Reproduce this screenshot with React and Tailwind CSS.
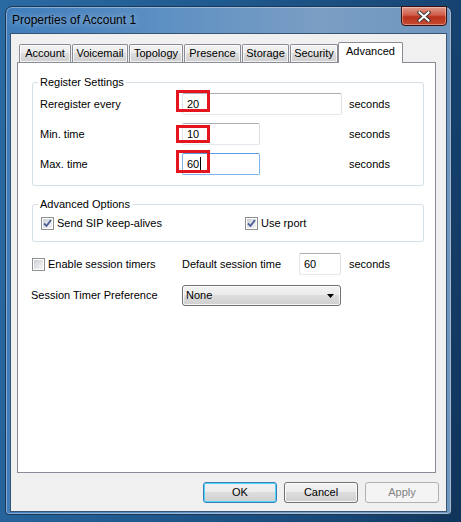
import React from "react";

function TextBox({ w, value, focused, cursor }) {
  return (
    <div
      className={`h-[22px] ${w} flex items-center pl-[4px] text-[11px] text-black bg-white border rounded-[2px] ${
        focused
          ? "border-[#7eb4ea] border-t-[#569de5]"
          : "border-[#e3e9ef] border-t-[#abadb3] border-l-[#e2e3ea] border-r-[#dbdfe6]"
      }`}
    >
      <span className="leading-[13px]">{value}</span>
      {cursor && <span className="w-px h-[14px] bg-black ml-[1px]" />}
    </div>
  );
}

function RedBox({ cls }) {
  return <div className={`absolute border-[3px] border-[#e4151f] pointer-events-none ${cls}`} />;
}

function CheckBox({ checked }) {
  return (
    <div className="w-[13px] h-[13px] border border-[#8e8f8f] bg-white p-px shrink-0">
      <div className="w-full h-full bg-[linear-gradient(135deg,#cbcfd5,#f6f6f6)] flex items-center justify-center">
        {checked && (
          <svg width="9" height="9" viewBox="0 0 9 9">
            <path d="M1 4.5 L3.5 7 L8 1" fill="none" stroke="#4a5f97" strokeWidth="1.8" />
          </svg>
        )}
      </div>
    </div>
  );
}

function Tab({ label, w, selected }) {
  if (selected) {
    return (
      <div
        className={`${w} h-[21px] -mb-px -ml-px relative z-10 bg-white border-x border-t border-[#898c95] rounded-t-[2px] flex justify-center items-start pt-[2px]`}
      >
        <span className="leading-[13px]">{label}</span>
      </div>
    );
  }
  return (
    <div
      className={`${w} h-[18px] border-x border-t border-[#898c95] rounded-t-[2px] bg-[linear-gradient(#f2f2f2,#ebebeb_50%,#dddddd_50%,#cfcfcf)] flex justify-center items-center shadow-[inset_0_0_0_1px_rgba(255,255,255,0.7)]`}
    >
      <span className="leading-[13px]">{label}</span>
    </div>
  );
}

function Button({ children, def, disabled }) {
  return (
    <div
      className={`w-[74px] h-[21px] rounded-[3px] border flex items-center justify-center leading-[13px] ${
        disabled
          ? "border-[#adb2b5] bg-[#f4f4f4] text-[#838383]"
          : def
          ? "border-[#3c7fb1] bg-[linear-gradient(#f2f2f2,#ebebeb_50%,#dddddd_50%,#cfcfcf)] shadow-[inset_0_0_0_1px_#48d7ff]"
          : "border-[#707070] bg-[linear-gradient(#f2f2f2,#ebebeb_50%,#dddddd_50%,#cfcfcf)] shadow-[inset_0_0_0_1px_rgba(255,255,255,0.8)]"
      }`}
    >
      {children}
    </div>
  );
}

export default function App() {
  return (
    <div className="w-[461px] h-[522px] overflow-hidden bg-[linear-gradient(100deg,#2a6aa3,#1f5a8f_40%,#174574_80%,#10345a)] pl-[5px] pt-[6px] font-['Liberation_Sans',Arial,sans-serif] text-[11px] text-black">
      <div className="w-[447px] h-[509px] rounded-t-[7px] rounded-b-[4px] border border-[#1c3653] bg-[linear-gradient(90deg,#3f7dbb,#5d90c3_35%,#7a9ec4_70%,#6f96bf)] shadow-[1px_2px_4px_rgba(0,0,0,0.5)] flex flex-col shadow-[inset_0_0_0_1px_rgba(255,255,255,0.35)]">
        <div className="h-[26px] flex justify-between items-start shrink-0">
          <div className="h-[26px] flex items-center pl-[6px] text-[12px] [text-shadow:0_0_6px_rgba(255,255,255,0.6)]">
            Properties of Account 1
          </div>
          <div className="-mt-px mr-[4px] w-[46px] h-[20px] rounded-b-[4px] border border-[#3c0f0c] bg-[linear-gradient(#e09a8c,#cf5c48_45%,#b8311c_55%,#c84b32)] flex items-center justify-center shadow-[inset_0_0_0_1px_rgba(255,255,255,0.35)]">
            <svg width="14" height="11" viewBox="0 0 14 11">
              <path d="M2.5 1.5 L11.5 9.5 M11.5 1.5 L2.5 9.5" stroke="#3b3b3b" strokeWidth="4" strokeLinecap="square" />
              <path d="M2.5 1.5 L11.5 9.5 M11.5 1.5 L2.5 9.5" stroke="#ffffff" strokeWidth="2" strokeLinecap="square" />
            </svg>
          </div>
        </div>
        <div className="ml-[4px] mr-[4px] mb-[2px] flex-1 border border-[#3a5572] bg-[#f0f0f0] flex flex-col pt-[8px] pr-[7px]">
          <div className="ml-[8px] h-[20px] flex items-end gap-px">
            <Tab label="Account" w="w-[52px]" />
            <Tab label="Voicemail" w="w-[56px]" />
            <Tab label="Topology" w="w-[54px]" />
            <Tab label="Presence" w="w-[57px]" />
            <Tab label="Storage" w="w-[47px]" />
            <Tab label="Security" w="w-[48px]" />
            <Tab label="Advanced" w="w-[65px]" selected />
          </div>
          <div className="ml-[6px] w-[419px] h-[411px] bg-white border border-[#898c95] pl-[14px] pr-[11px] flex flex-col">
            {/* Register Settings */}
            <div className="relative mt-[19px] border border-[#d5dfe5] rounded-[3px] pt-[10px] pb-[10px] flex flex-col gap-[8px]">
              <span className="absolute -top-[7px] left-[5px] px-[2px] bg-white leading-[13px]">Register Settings</span>
              <div className="h-[22px] flex items-center">
                <div className="w-[149px] pl-[7px]">Reregister every</div>
                <div className="relative w-[160px]">
                  <TextBox w="w-[160px]" value="20" />
                  <RedBox cls="-top-[3px] -left-[6px] w-[34px] h-[22px]" />
                </div>
                <div className="ml-[7px]">seconds</div>
              </div>
              <div className="h-[22px] flex items-center">
                <div className="w-[149px] pl-[7px]">Min. time</div>
                <div className="relative w-[160px]">
                  <TextBox w="w-[78px]" value="10" />
                  <RedBox cls="top-[2px] -left-[6px] w-[34px] h-[18px]" />
                </div>
                <div className="ml-[7px]">seconds</div>
              </div>
              <div className="h-[22px] flex items-center">
                <div className="w-[149px] pl-[7px]">Max. time</div>
                <div className="relative w-[160px]">
                  <TextBox w="w-[78px]" value="60" focused cursor />
                  <RedBox cls="-top-[3px] -left-[6px] w-[34px] h-[23px]" />
                </div>
                <div className="ml-[7px]">seconds</div>
              </div>
            </div>
            {/* Advanced Options */}
            <div className="relative mt-[18px] h-[38px] border border-[#d5dfe5] rounded-[3px] flex items-center pl-[8px] pt-[1px]">
              <span className="absolute -top-[7px] left-[5px] px-[2px] bg-white leading-[13px]">Advanced Options</span>
              <div className="w-[204px] flex items-center gap-[3px]">
                <CheckBox checked />
                <span>Send SIP keep-alives</span>
              </div>
              <div className="flex items-center gap-[3px]">
                <CheckBox checked />
                <span>Use rport</span>
              </div>
            </div>
            {/* Session timers */}
            <div className="mt-[11px] h-[22px] flex items-center">
              <div className="w-[150px] flex items-center gap-[3px]">
                <CheckBox />
                <span>Enable session timers</span>
              </div>
              <div className="w-[117px]">Default session time</div>
              <TextBox w="w-[42px]" value="60" />
              <div className="ml-[8px]">seconds</div>
            </div>
            <div className="mt-[10px] h-[21px] flex items-center">
              <div className="w-[150px] -ml-px">Session Timer Preference</div>
              <div className="w-[159px] h-[21px] ml-px rounded-[3px] border border-[#707070] bg-[linear-gradient(#f2f2f2,#ebebeb_50%,#dddddd_50%,#cfcfcf)] shadow-[inset_0_0_0_1px_rgba(255,255,255,0.8)] flex items-center justify-between pl-[3px] pr-[6px]">
                <span>None</span>
                <svg width="7" height="4" viewBox="0 0 7 4">
                  <path d="M0 0 H7 L3.5 4 Z" fill="#000" />
                </svg>
              </div>
            </div>
          </div>
          <div className="mt-[9px] flex justify-end gap-[7px]">
            <Button def>OK</Button>
            <Button>Cancel</Button>
            <Button disabled>Apply</Button>
          </div>
        </div>
      </div>
    </div>
  );
}
